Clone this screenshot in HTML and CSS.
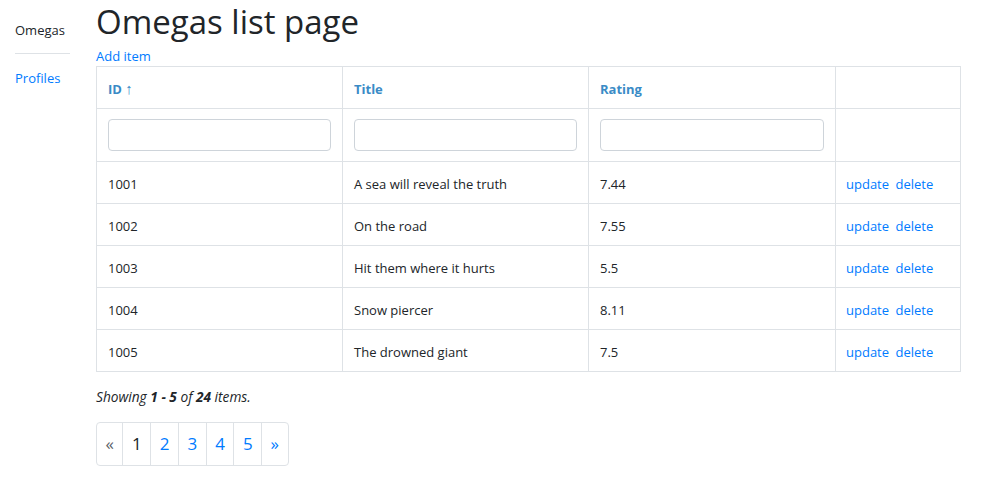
FILE: index.html
```html
<!DOCTYPE html>
<html lang="en">
<head>
    <meta charset="UTF-8">
    <meta name="viewport" content="width=device-width, initial-scale=1.0">
    <title>Omegas list page</title>
    <link rel="stylesheet" href="styles.css">
</head>
<body>
    <div class="layout">
        <aside class="side">
            <ul class="side-nav">
                <li class="side-item active"><a href="#">Omegas</a></li>
                <li class="side-item"><a href="#">Profiles</a></li>
            </ul>
        </aside>

        <main class="main">
            <h1>Omegas list page</h1>
            <p class="add-line"><a href="#">Add item</a></p>

            <div class="grid-view">
                <table class="grid-table">
                    <thead>
                        <tr class="head-row">
                            <th class="col-id"><a href="#">ID <span class="sort-arrow">&uarr;</span></a></th>
                            <th class="col-title"><a href="#">Title</a></th>
                            <th class="col-rating"><a href="#">Rating</a></th>
                            <th class="col-actions"></th>
                        </tr>
                        <tr class="filter-row">
                            <td><input type="text" class="filter-input"></td>
                            <td><input type="text" class="filter-input"></td>
                            <td><input type="text" class="filter-input"></td>
                            <td></td>
                        </tr>
                    </thead>
                    <tbody>
                        <tr>
                            <td>1001</td>
                            <td>A sea will reveal the truth</td>
                            <td>7.44</td>
                            <td class="actions"><a href="#">update</a> <a href="#">delete</a></td>
                        </tr>
                        <tr>
                            <td>1002</td>
                            <td>On the road</td>
                            <td>7.55</td>
                            <td class="actions"><a href="#">update</a> <a href="#">delete</a></td>
                        </tr>
                        <tr>
                            <td>1003</td>
                            <td>Hit them where it hurts</td>
                            <td>5.5</td>
                            <td class="actions"><a href="#">update</a> <a href="#">delete</a></td>
                        </tr>
                        <tr>
                            <td>1004</td>
                            <td>Snow piercer</td>
                            <td>8.11</td>
                            <td class="actions"><a href="#">update</a> <a href="#">delete</a></td>
                        </tr>
                        <tr>
                            <td>1005</td>
                            <td>The drowned giant</td>
                            <td>7.5</td>
                            <td class="actions"><a href="#">update</a> <a href="#">delete</a></td>
                        </tr>
                    </tbody>
                </table>

                <div class="summary">Showing <b>1 - 5</b> of <b>24</b> items.</div>

                <ul class="pagination">
                    <li class="page-item disabled"><span class="page-link">&laquo;</span></li>
                    <li class="page-item active"><span class="page-link">1</span></li>
                    <li class="page-item"><a class="page-link" href="#">2</a></li>
                    <li class="page-item"><a class="page-link" href="#">3</a></li>
                    <li class="page-item"><a class="page-link" href="#">4</a></li>
                    <li class="page-item"><a class="page-link" href="#">5</a></li>
                    <li class="page-item"><a class="page-link" href="#">&raquo;</a></li>
                </ul>
            </div>
        </main>
    </div>
</body>
</html>
```

FILE: styles.css
```css
* {
  box-sizing: border-box;
  margin: 0;
  padding: 0;
}

body {
  --text: #212529;
  --link: #007bff;
  --sort: #3a8bc6;
  --line: #dee2e6;
  --muted: #5a6268;

  font-family: 'Open Sans', 'Noto Sans', sans-serif;
  font-size: 13px;
  line-height: 21px;
  color: var(--text);
  background: #fff;
}

a {
  color: var(--link);
  text-decoration: none;
}

.layout {
  display: flex;
  padding-left: 15px;
}

/* menu de la izquierda */
.side {
  width: 55px;
  margin-right: 26px;
}

.side-nav {
  list-style: none;
  padding-top: 10px;
}

.side-item a {
  display: block;
  padding: 10px 0;
}

.side-item.active a {
  color: var(--text);
  padding-bottom: 12px;
  border-bottom: 1px solid var(--line);
}

.side-item + .side-item a {
  padding-top: 14px;
}

.main {
  width: 865px;
}

h1 {
  font-size: 33px;
  font-weight: 400;
  line-height: 40px;
  margin-top: 2px;
}

.add-line {
  margin-top: 5px;
  line-height: 19px;
}

/* tabla */
.grid-table {
  width: 100%;
  border-collapse: collapse;
  table-layout: fixed;
  border: 1px solid var(--line);
}

.grid-table th,
.grid-table td {
  border: 1px solid var(--line);
  padding: 12px 11px 8px;
  height: 42px;
  text-align: left;
  vertical-align: middle;
}

.col-id,
.col-title {
  width: 246px;
}

.col-rating {
  width: 247px;
}

.grid-table th a {
  color: var(--sort);
  font-weight: 700;
}

.sort-arrow {
  font-weight: 400;
  font-size: 15px;
  line-height: 1;
}

.grid-table .filter-row td {
  padding: 10px 11px;
  height: 53px;
}

.filter-input {
  display: block;
  width: 100%;
  height: 32px;
  border: 1px solid #ced4da;
  border-radius: 4px;
  padding: 4px 8px;
  font: inherit;
}

.grid-table td.actions {
  padding-left: 10px;
}

.actions a + a {
  margin-left: 3px;
}

.summary {
  margin-top: 14px;
  font-style: italic;
  font-size: 13.7px;
}

.pagination {
  display: flex;
  list-style: none;
  margin-top: 15px;
}

.page-link {
  display: block;
  padding: 10px 8.5px;
  margin-left: -1px;
  font-size: 17px;
  line-height: 22px;
  border: 1px solid var(--line);
  color: var(--link);
}

.page-item:first-child .page-link {
  margin-left: 0;
  border-radius: 4px 0 0 4px;
}

.page-item:last-child .page-link {
  border-radius: 0 4px 4px 0;
}

.page-item.disabled .page-link {
  color: var(--muted);
}

.page-item.active .page-link {
  color: var(--text);
}
```
